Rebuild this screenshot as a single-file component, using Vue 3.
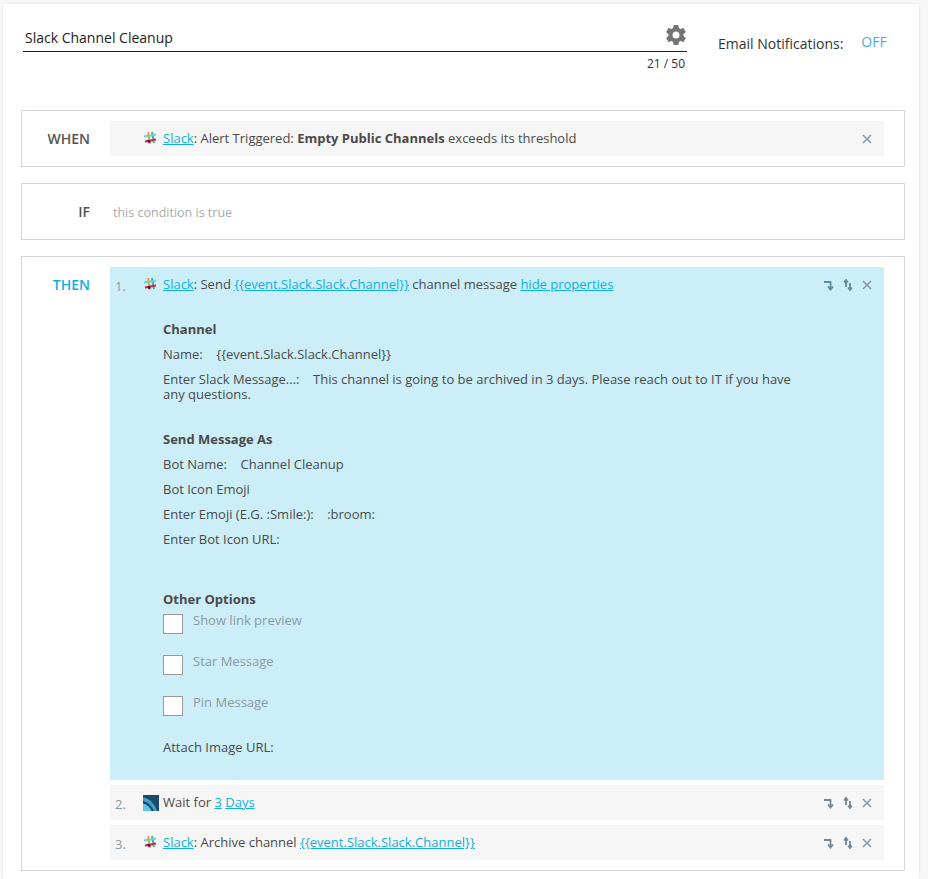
<script setup>
const details = [
  { id: 'channel', title: 'Channel', lines: ['Name:    {{event.Slack.Slack.Channel}}', 'Enter Slack Message...:    This channel is going to be archived in 3 days. Please reach out to IT if you have any questions.'] },
  { id: 'send', title: 'Send Message As', lines: ['Bot Name:    Channel Cleanup', 'Bot Icon Emoji', 'Enter Emoji (E.G. :Smile:):    :broom:', 'Enter Bot Icon URL:'] }
]
const options = ['Show link preview', 'Star Message', 'Pin Message']
const channelVar = '{{event.Slack.Slack.Channel}}'
</script>

<template>
  <div class="page">
    <svg width="0" height="0" class="defs">
      <symbol id="slack" viewBox="0 0 14 14">
        <path d="M5 1 L7 13" stroke="#e9a820" stroke-width="2" />
        <path d="M9 1 L11 12" stroke="#3eb890" stroke-width="2" />
        <path d="M1 5.5 L13 3.5" stroke="#70cadb" stroke-width="2" />
        <path d="M2 10.5 L13 8.5" stroke="#e01765" stroke-width="2" />
        <path d="M4.5 9.5 L7 9 L7.5 11.5 L5 12 Z" fill="#3d1f3d" />
      </symbol>
      <symbol id="move" viewBox="0 0 12 12">
        <path d="M1 3H7.500V9.500M5 7.500l2.500 3 2.500-3" />
      </symbol>
      <symbol id="swap" viewBox="0 0 12 12">
        <path d="M4 8V1.500M2.200 3.500L4 1l1.800 2.500M8 4v6.500M6.200 8.500L8 11l1.800-2.500" />
      </symbol>
      <symbol id="close" viewBox="0 0 10 10">
        <path d="M1 1l8 8M9 1l-8 8" />
      </symbol>
    </svg>

    <div class="card">
      <div class="top">
        <div class="title-wrap">
          <div class="title-line">
            <span class="title">Slack Channel Cleanup</span>
            <svg class="gear" viewBox="0 0 24 24" width="24" height="24">
              <path fill="#757575" d="M19.4 13a7.5 7.5 0 0 0 0-2l2.1-1.6a.5.5 0 0 0 .1-.6l-2-3.5a.5.5 0 0 0-.6-.2l-2.5 1a7.300 7.300 0 0 0-1.700-1l-.4-2.700A.5.5 0 0 0 14 2h-4a.5.5 0 0 0-.5.4l-.4 2.700a7.300 7.300 0 0 0-1.700 1l-2.500-1a.5.5 0 0 0-.6.2l-2 3.500a.5.5 0 0 0 .1.6L4.500 11a7.500 7.500 0 0 0 0 2l-2.100 1.600a.5.5 0 0 0-.1.6l2 3.500a.5.5 0 0 0 .6.2l2.500-1a7.300 7.300 0 0 0 1.700 1l.4 2.700a.5.5 0 0 0 .5.4h4a.5.5 0 0 0 .5-.4l.4-2.700a7.300 7.300 0 0 0 1.700-1l2.500 1a.5.5 0 0 0 .6-.2l2-3.500a.5.5 0 0 0-.1-.6ZM12 15.500a3.500 3.500 0 1 1 0-7 3.500 3.500 0 0 1 0 7Z" />
            </svg>
          </div>
          <div class="counter">21 / 50</div>
        </div>
        <div class="email">
          <span>Email Notifications:</span>
          <span class="off">OFF</span>
        </div>
      </div>

      <section class="box when-box">
        <div class="label">WHEN</div>
        <div class="steps">
          <div class="step">
            <span class="num"></span>
            <svg class="icon" width="14" height="14"><use href="#slack" /></svg>
            <div class="text"><a>Slack</a>: Alert Triggered: <b>Empty Public Channels</b> exceeds its threshold</div>
            <div class="actions"><svg class="x" width="10" height="10"><use href="#close" /></svg></div>
          </div>
        </div>
      </section>

      <section class="box if-box">
        <div class="label">IF</div>
        <div class="cond">this condition is true</div>
      </section>

      <section class="box then-box">
        <div class="label then">THEN</div>
        <div class="steps">
          <div class="step open">
            <span class="num">1.</span>
            <svg class="icon" width="14" height="14"><use href="#slack" /></svg>
            <div class="text">
              <a>Slack</a>: Send <a>{{ channelVar }}</a> channel message <a>hide properties</a>
              <div class="props">
                <div v-for="group in details" :key="group.id" class="group" :class="group.id">
                  <h4>{{ group.title }}</h4>
                  <p v-for="line in group.lines" :key="line">{{ line }}</p>
                </div>
                <div class="group other">
                  <h4>Other Options</h4>
                  <label v-for="opt in options" :key="opt" class="check">
                    <span class="tick"></span>
                    <span>{{ opt }}</span>
                  </label>
                  <p class="attach">Attach Image URL:</p>
                </div>
              </div>
            </div>
            <div class="actions">
              <svg width="12" height="12"><use href="#move" /></svg>
              <svg width="12" height="12"><use href="#swap" /></svg>
              <svg class="x" width="10" height="10"><use href="#close" /></svg>
            </div>
          </div>

          <div class="step">
            <span class="num">2.</span>
            <svg class="icon wait" width="16" height="16" viewBox="0 0 16 16">
              <rect width="16" height="16" fill="#1b4a68" />
              <path d="M0 2.500 C7 3.500 12 9 14 16 H11 C9 11 5 7 0 6 Z" fill="#3f9fc8" />
              <path d="M0 8.500 C4 9.500 7 12 8.500 16 H0 Z" fill="#5cc6ec" />
            </svg>
            <div class="text">Wait for <a>3</a> <a>Days</a></div>
            <div class="actions">
              <svg width="12" height="12"><use href="#move" /></svg>
              <svg width="12" height="12"><use href="#swap" /></svg>
              <svg class="x" width="10" height="10"><use href="#close" /></svg>
            </div>
          </div>

          <div class="step">
            <span class="num">3.</span>
            <svg class="icon" width="14" height="14"><use href="#slack" /></svg>
            <div class="text"><a>Slack</a>: Archive channel <a>{{ channelVar }}</a></div>
            <div class="actions">
              <svg width="12" height="12"><use href="#move" /></svg>
              <svg width="12" height="12"><use href="#swap" /></svg>
              <svg class="x" width="10" height="10"><use href="#close" /></svg>
            </div>
          </div>
        </div>
      </section>
    </div>
  </div>
</template>

<style scoped>
.page {
  height: 879px;
  overflow: hidden;
  padding: 4px 9px 0 3px;
  box-sizing: border-box;
  background: #f7f7f7;
  font-family: "Open Sans", sans-serif;
  font-size: 13px;
  color: #4a4a4a;
}

.defs {
  display: block;
  height: 0;
}

.card {
  background: #fff;
  padding: 0 14px 0 18px;
  height: 875px;
  box-sizing: border-box;
  box-shadow: 0 0 2px rgba(0, 0, 0, 0.12);
}

.top {
  display: flex;
  height: 106px;
  padding-left: 2px;
}

.title-wrap {
  width: 664px;
}

.title-line {
  display: flex;
  justify-content: space-between;
  align-items: center;
  height: 48px;
  padding: 20px 0 0 2px;
  box-sizing: border-box;
  border-bottom: 1px solid #222;
}

.title {
  font-size: 14px;
  color: #222;
}

.gear {
  margin-right: -1px;
  margin-top: -6px;
}

.counter {
  text-align: right;
  font-size: 12px;
  color: #333;
  margin-top: 3px;
  padding-right: 2px;
}

.email {
  display: flex;
  gap: 18px;
  margin-left: 31px;
  padding-top: 30px;
  font-size: 14px;
  color: #333;
}

.off {
  color: #4da8ee;
  margin-top: -2px;
}

.box {
  display: flex;
  border: 1px solid #d3d6dc;
  margin-bottom: 16px;
  padding: 10px 20px 10px 0;
  box-sizing: border-box;
}

.label {
  width: 68px;
  flex: none;
  text-align: right;
  font-size: 14px;
  font-weight: 600;
  color: #555;
  line-height: 35px;
  margin-right: 20px;
}

.label.then {
  color: #0fb0e0;
}

.when-box,
.if-box {
  height: 57px;
}

.then-box {
  height: 615px;
}

.cond {
  color: #aaa;
  font-size: 12.500px;
  line-height: 37px;
  padding-left: 3px;
}

.steps {
  flex: 1;
  display: flex;
  flex-direction: column;
  gap: 5px;
}

.step {
  display: flex;
  background: #f6f6f6;
  min-height: 35px;
  align-items: flex-start;
  line-height: 17px;
  padding-top: 9px;
  box-sizing: border-box;
}

.step.open {
  background: #cbeef8;
  height: 513px;
}

.num {
  width: 33px;
  flex: none;
  padding-left: 5px;
  box-sizing: border-box;
  color: #8b98a3;
  margin-top: 2px;
}

.icon {
  flex: none;
  margin-top: 1px;
  margin-right: 6px;
}

.icon.wait {
  margin-right: 4px;
}

.text {
  flex: 1;
  min-width: 0;
}

.text a {
  color: #0fb0e0;
  text-decoration: underline;
}

.text b {
  font-weight: 700;
}

.actions {
  display: flex;
  align-items: center;
  gap: 7px;
  margin-right: 12px;
  height: 17px;
}

.actions svg {
  fill: none;
  stroke: #76858f;
  stroke-width: 1.800;
}

.open .actions svg {
  stroke: #5e8a9c;
}

.actions .x,
.open .actions .x {
  stroke: #7f929e;
  stroke-width: 1.400;
  margin-left: 1px;
}

.props {
  width: 640px;
  padding-top: 29px;
}

.group {
  margin-bottom: 30px;
}

.group.send {
  margin-bottom: 45px;
}

.group h4 {
  margin: 0 0 10px;
  font-size: 13px;
  font-weight: 700;
  line-height: 15px;
}

.group p {
  margin: 0 0 10px;
  white-space: pre-wrap;
  line-height: 15px;
}

.group.other h4 {
  margin-bottom: 6px;
}

.check {
  display: flex;
  gap: 10px;
  height: 41px;
  line-height: 15px;
  color: #8b9aa3;
}

.tick {
  width: 20px;
  height: 20px;
  box-sizing: border-box;
  margin-top: 1px;
  background: #fff;
  border: 1px solid #999;
  flex: none;
}

.group p.attach {
  margin-top: 4px;
}
</style>

<style>
html,
body {
  background: #f7f7f7;
}
</style>
